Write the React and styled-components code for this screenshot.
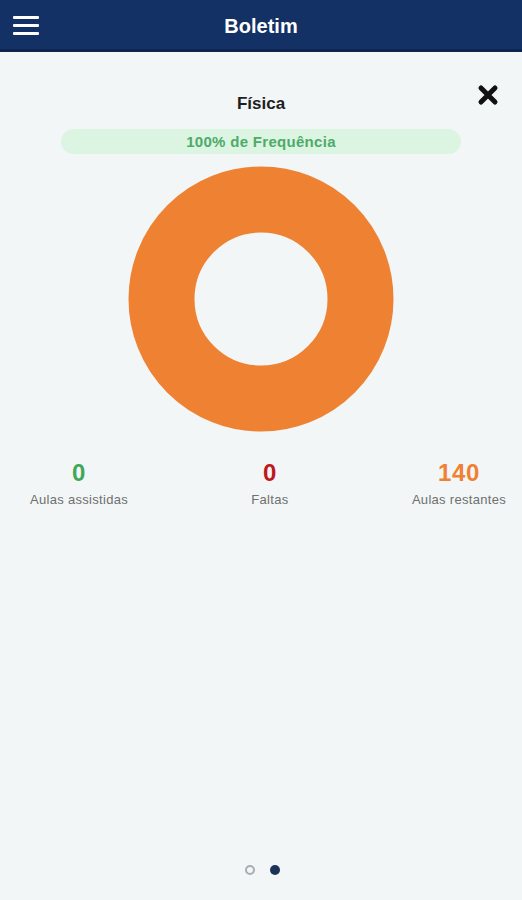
import React from 'react';
import styled, { createGlobalStyle } from 'styled-components';

const GlobalStyle = createGlobalStyle`
  html, body {
    margin: 0;
    padding: 0;
    background: #f2f6f7;
    font-family: "Liberation Sans", Arial, sans-serif;
  }
`;

const Page = styled.div`
  width: 522px;
  height: 900px;
  display: flex;
  flex-direction: column;
  background: #f2f6f7;
  overflow: hidden;
`;

const Header = styled.header`
  height: 49px;
  background: #133165;
  border-bottom: 3px solid #0c2550;
  display: flex;
  align-items: center;
  position: relative;
  padding: 0 13px;
`;

const MenuButton = styled.div`
  width: 26px;
  display: flex;
  flex-direction: column;
  gap: 5px;
  margin-top: 2px;
`;

const MenuLine = styled.span`
  display: block;
  height: 3px;
  background: #ffffff;
  border-radius: 1px;
`;

const Title = styled.h1`
  position: absolute;
  left: 0;
  right: 0;
  top: 0;
  bottom: 0;
  margin: 0;
  padding-top: 4px;
  display: flex;
  align-items: center;
  justify-content: center;
  color: #ffffff;
  font-size: 20px;
  font-weight: bold;
  pointer-events: none;
`;

const Content = styled.main`
  flex: 1;
  display: flex;
  flex-direction: column;
  align-items: center;
  position: relative;
  padding-top: 42px;
`;

const CloseButton = styled.div`
  position: absolute;
  top: 32px;
  right: 23px;
  width: 22px;
  height: 22px;
`;

const Subject = styled.h2`
  margin: 0;
  height: 20px;
  line-height: 20px;
  font-size: 17px;
  font-weight: bold;
  color: #1e1e1e;
`;

const FrequencyPill = styled.div`
  margin-top: 15px;
  width: 400px;
  height: 25px;
  border-radius: 13px;
  background: #dcf4e2;
  color: #4dab68;
  font-size: 15px;
  letter-spacing: 0.3px;
  font-weight: bold;
  display: flex;
  align-items: center;
  justify-content: center;
`;

const ChartWrap = styled.div`
  margin-top: 12px;
  width: 266px;
  height: 266px;
`;

const Stats = styled.div`
  align-self: stretch;
  margin-top: 27px;
  padding: 0 16px 0 30px;
  display: flex;
  justify-content: space-between;
`;

const Stat = styled.div`
  display: flex;
  flex-direction: column;
  align-items: center;
`;

const StatValue = styled.div`
  font-size: 24px;
  font-weight: bold;
  letter-spacing: 0.6px;
  line-height: 28px;
  color: ${(p) => p.color};
`;

const StatLabel = styled.div`
  margin-top: 5px;
  font-size: 13px;
  letter-spacing: 0.3px;
  color: #6f6f6f;
`;

const Dots = styled.div`
  position: absolute;
  bottom: 25px;
  left: 0;
  right: 0;
  display: flex;
  justify-content: center;
  gap: 13px;
`;

const Dot = styled.span`
  width: 10px;
  height: 10px;
  box-sizing: border-box;
  border-radius: 50%;
  margin-left: 2px;
  ${(p) =>
    p.active
      ? 'background: #1c3358;'
      : 'border: 2px solid #a9adb0; background: transparent;'}
`;

const Donut = () => (
  <svg width="266" height="266" viewBox="0 0 266 266">
    <circle cx="133" cy="133" r="99.5" fill="none" stroke="#ee8232" strokeWidth="66" />
  </svg>
);

const CloseIcon = () => (
  <svg width="22" height="22" viewBox="0 0 22 22">
    <path d="M4 4 L18 18 M18 4 L4 18" stroke="#111" strokeWidth="5" strokeLinecap="round" />
  </svg>
);

const App = () => (
  <>
    <GlobalStyle />
    <Page>
      <Header>
        <MenuButton>
          <MenuLine />
          <MenuLine />
          <MenuLine />
        </MenuButton>
        <Title>Boletim</Title>
      </Header>
      <Content>
        <CloseButton>
          <CloseIcon />
        </CloseButton>
        <Subject>Física</Subject>
        <FrequencyPill>100% de Frequência</FrequencyPill>
        <ChartWrap>
          <Donut />
        </ChartWrap>
        <Stats>
          <Stat>
            <StatValue color="#3fa75a">0</StatValue>
            <StatLabel>Aulas assistidas</StatLabel>
          </Stat>
          <Stat>
            <StatValue color="#c0171c">0</StatValue>
            <StatLabel>Faltas</StatLabel>
          </Stat>
          <Stat>
            <StatValue color="#ee8232">140</StatValue>
            <StatLabel>Aulas restantes</StatLabel>
          </Stat>
        </Stats>
        <Dots>
          <Dot />
          <Dot active />
        </Dots>
      </Content>
    </Page>
  </>
);

export default App;
